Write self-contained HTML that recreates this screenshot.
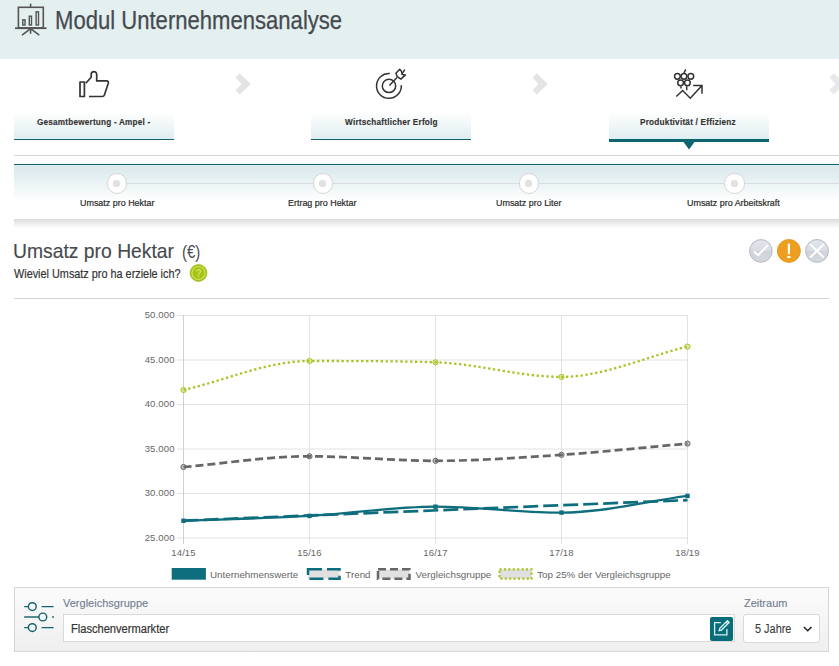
<!DOCTYPE html>
<html><head><meta charset="utf-8">
<style>
*{margin:0;padding:0;box-sizing:border-box}
html,body{width:839px;height:666px;overflow:hidden;background:#fff;font-family:"Liberation Sans",sans-serif}
.a{position:absolute}
.t{position:absolute;white-space:nowrap;line-height:1;transform-origin:0 0}
#hdr{left:0;top:0;width:839px;height:59px;background:#e4f0f0}
.tab{position:absolute;top:112px;width:160px;height:28px;background:linear-gradient(#fff,#e0edf0);border-bottom:1.3px solid #1d5f68;box-shadow:inset 0 -1px 0 #d2f2f6}
.tab.act{border-bottom:3px solid #0f6470}
.lbl{font-weight:bold;font-size:9.5px;letter-spacing:0.25px;color:#333;-webkit-text-stroke:0.15px #333}
.sub{font-size:9.5px;color:#2a2a2a;transform:scaleX(0.94);-webkit-text-stroke:0.2px #2a2a2a}
</style></head><body>
<div id="hdr" class="a"></div>
<!-- header icon -->
<svg class="a" style="left:0;top:0" width="60" height="40" viewBox="0 0 60 40">
 <g fill="none" stroke="#555" stroke-width="1.6">
  <path d="M30.6 3.6V7.3"/>
  <rect x="18.4" y="7.3" width="24.9" height="20.6"/>
  <path d="M15 28.2H46.5" stroke-width="1.8"/>
  <path d="M30.6 28.6V33.7M30.6 28.6L22 35.2M30.6 28.6L39.3 35.2"/>
  <rect x="22.8" y="19.8" width="2.2" height="5.2" stroke-width="1.4"/>
  <rect x="29.3" y="16.2" width="2.2" height="8.8" stroke-width="1.4"/>
  <rect x="36.1" y="11.8" width="2.4" height="13.2" stroke-width="1.4"/>
 </g>
</svg>
<div class="t" style="left:54.8px;top:7.8px;font-size:25px;color:#464a4f;transform:scaleX(0.883);-webkit-text-stroke:0.25px #464a4f">Modul Unternehmensanalyse</div>

<!-- tabs -->
<div class="tab" style="left:14px"></div>
<div class="tab" style="left:311px"></div>
<div class="tab act" style="left:609px;height:29.5px"></div>
<svg class="a" style="left:680px;top:141px" width="18" height="10"><path d="M3 0.3L15 0.3L9 8.4Z" fill="#0f6470"/></svg>
<div class="t lbl" style="left:36.6px;top:117.3px;transform:scaleX(0.859)">Gesamtbewertung - Ampel -</div>
<div class="t lbl" style="left:344.6px;top:117.3px;transform:scaleX(0.863)">Wirtschaftlicher Erfolg</div>
<div class="t lbl" style="left:640.2px;top:117.3px;transform:scaleX(0.866)">Produktivität / Effizienz</div>

<!-- chevrons -->
<svg class="a" style="left:230px;top:70px" width="30" height="30"><path d="M5.5 7.4L9.8 3.3L20.8 13.9L9.8 24.5L5.5 20.3L11.6 13.9Z" fill="#e4e4e7"/></svg>
<svg class="a" style="left:527px;top:70px" width="30" height="30"><path d="M5.5 7.4L9.8 3.3L20.8 13.9L9.8 24.5L5.5 20.3L11.6 13.9Z" fill="#e4e4e7"/></svg>
<svg class="a" style="left:824px;top:70px" width="30" height="30"><path d="M5.5 7.4L9.8 3.3L20.8 13.9L9.8 24.5L5.5 20.3L11.6 13.9Z" fill="#e9e9ec"/></svg>

<!-- thumb icon -->
<svg class="a" style="left:74px;top:66px" width="40" height="34" viewBox="0 0 40 34">
 <g fill="none" stroke="#333" stroke-width="1.7" stroke-linejoin="round">
  <rect x="6" y="16" width="4.4" height="14.5"/>
  <path d="M11.8 17.2L17.2 11.2V8.3A2.75 2.75 0 0 1 22.7 8.3V14.9H32.9Q34.9 15.2 34.3 17.3L30.4 29Q29.9 30.5 28.3 30.5H15"/>
 </g>
</svg>
<!-- target icon -->
<svg class="a" style="left:370px;top:64px" width="40" height="38" viewBox="0 0 40 38">
 <g fill="none" stroke="#333" stroke-width="1.5" stroke-linejoin="round">
  <path d="M19.8 9.6A12.4 12.4 0 1 0 31.3 21.1"/>
  <circle cx="19" cy="21.9" r="6.7"/>
  <path d="M19.4 21.4L27 13.6M31.5 10.6L34.8 5.7"/>
  <path d="M29.7 5.2L25.9 9.3L27.3 12.6L30.9 15.1L35.4 10.9L32.4 10.4L31.4 7.2Z"/>
 </g>
</svg>
<!-- grape icon -->
<svg class="a" style="left:668px;top:64px" width="40" height="38" viewBox="0 0 40 38">
 <g fill="none" stroke="#333" stroke-width="1.5">
  <circle cx="9.4" cy="12.3" r="2.85"/><circle cx="16" cy="12.3" r="2.85"/><circle cx="22.8" cy="12.3" r="2.85"/>
  <circle cx="12.6" cy="18.8" r="2.85"/><circle cx="19.4" cy="18.8" r="2.85"/>
  <path d="M16 9L17.7 5.4M13.1 22.3L12.8 24.5M18.6 22.3L18.8 26.2"/>
  <path d="M8.3 32.5L14.6 26.5L22.3 34.2L33.7 21.7M25.1 21.4H34V29.7"/>
 </g>
</svg>

<!-- divider line -->
<div class="a" style="left:14px;top:155px;width:825px;height:1px;background:#d3d3d3"></div>

<!-- sub tabs -->
<div class="a" style="left:14px;top:163.7px;width:825px;height:56px;background:linear-gradient(#d4f3f6 0px,#dce9ed 2px,#e3eff1 12px,#ffffff 36px,#ffffff 56px);border-top:1.6px solid #1d5f68"></div>
<div class="a" style="left:14px;top:219px;width:825px;height:9px;background:linear-gradient(#dcdcdc,#ffffff)"></div>
<div class="a" style="left:117px;top:183px;width:722px;height:1px;background:#d5dde0"></div>
<div class="a" style="left:106.7px;top:173.4px;width:20.2px;height:20.2px;border-radius:50%;background:#fff;border:1px solid #d6d6d6"></div>
<div class="a" style="left:113.1px;top:179.8px;width:7.4px;height:7.4px;border-radius:50%;background:#e2e2e2;box-shadow:0 0 1px #e2e2e2"></div>
<div class="a" style="left:312.6px;top:173.4px;width:20.2px;height:20.2px;border-radius:50%;background:#fff;border:1px solid #d6d6d6"></div>
<div class="a" style="left:319.0px;top:179.8px;width:7.4px;height:7.4px;border-radius:50%;background:#e2e2e2;box-shadow:0 0 1px #e2e2e2"></div>
<div class="a" style="left:518.5px;top:173.4px;width:20.2px;height:20.2px;border-radius:50%;background:#fff;border:1px solid #d6d6d6"></div>
<div class="a" style="left:524.9px;top:179.8px;width:7.4px;height:7.4px;border-radius:50%;background:#e2e2e2;box-shadow:0 0 1px #e2e2e2"></div>
<div class="a" style="left:724.4px;top:173.4px;width:20.2px;height:20.2px;border-radius:50%;background:#fff;border:1px solid #d6d6d6"></div>
<div class="a" style="left:730.8px;top:179.8px;width:7.4px;height:7.4px;border-radius:50%;background:#e2e2e2;box-shadow:0 0 1px #e2e2e2"></div>
<div class="t sub" style="left:79.7px;top:197.9px">Umsatz pro Hektar</div>
<div class="t sub" style="left:288px;top:197.9px">Ertrag pro Hektar</div>
<div class="t sub" style="left:496px;top:197.9px">Umsatz pro Liter</div>
<div class="t sub" style="left:687.2px;top:197.9px">Umsatz pro Arbeitskraft</div>

<!-- heading -->
<div class="t" style="left:12.6px;top:239.9px;font-size:21px;color:#464a4f;transform:scaleX(0.92);-webkit-text-stroke:0.15px #464a4f">Umsatz pro Hektar</div>
<div class="t" style="left:181.5px;top:242.8px;font-size:18.5px;color:#4a4e55;transform:scaleX(0.81)">(€)</div>
<div class="t" style="left:14px;top:267px;font-size:13px;color:#333;transform:scaleX(0.835);-webkit-text-stroke:0.2px #333">Wieviel Umsatz pro ha erziele ich?</div>
<svg class="a" style="left:188px;top:262px" width="22" height="22" viewBox="0 0 22 22">
 <circle cx="10.5" cy="11" r="8.5" fill="#a6c21a" stroke="#9cb61c" stroke-width="0.6"/>
 <circle cx="10.5" cy="11" r="6.5" fill="none" stroke="#cfe551" stroke-width="1.1"/>
 <text x="10.5" y="14.6" text-anchor="middle" font-family="Liberation Sans" font-weight="bold" font-size="10" fill="#cfe551">?</text>
</svg>
<!-- status icons -->
<svg class="a" style="left:745px;top:235px" width="94" height="32" viewBox="0 0 94 32">
 <defs>
  <linearGradient id="gg" x1="0" y1="0" x2="0" y2="1"><stop offset="0" stop-color="#e2e5ea"/><stop offset="0.5" stop-color="#dadde3"/><stop offset="0.5" stop-color="#cfd3d9"/><stop offset="1" stop-color="#d6d9df"/></linearGradient>
 </defs>
 <circle cx="15.9" cy="15.9" r="11.3" fill="url(#gg)" stroke="#b5b9c2" stroke-width="1"/>
 <path d="M7.9 15.9L12.1 19.7L21.8 9.7" transform="translate(1 0.5)" fill="none" stroke="#fff" stroke-width="2"/>
 <circle cx="43.9" cy="15.9" r="11.5" fill="#ee9f1f" stroke="#dc9020" stroke-width="0.8"/>
 <rect x="42.8" y="8.6" width="2.2" height="10.6" fill="#fff"/>
 <rect x="42.3" y="21" width="3.2" height="2" fill="#fff"/>
 <circle cx="72" cy="15.9" r="11.4" fill="url(#gg)" stroke="#b5b9c2" stroke-width="1"/>
 <path d="M65 9.1L78.9 22.6M78.9 9.1L65 22.6" fill="none" stroke="#fff" stroke-width="2"/>
</svg>

<div class="a" style="left:14px;top:298px;width:815px;height:1px;background:#d3d3d3"></div>

<!-- chart -->
<svg class="a" style="left:0;top:300px" width="839" height="290" viewBox="0 300 839 290">
 <g stroke="#e2e2e2" stroke-width="1" fill="none">
  <path d="M177 315.5H687.5M177 360H687.5M177 404.5H687.5M177 449H687.5M177 493.5H687.5M177 538H687.5"/>
  <path d="M183.5 315.5V544M309.5 315.5V544M435.5 315.5V544M561.5 315.5V544M687.5 315.5V544"/>
 </g>
 <path d="M183.5 315.5V544" stroke="#d0d0d0" stroke-width="1"/>
 <g font-family="Liberation Sans" font-size="9.5" fill="#666" text-anchor="end" letter-spacing="0.15">
  <text x="174.6" y="318.2">50.000</text>
  <text x="174.6" y="362.7">45.000</text>
  <text x="174.6" y="407.2">40.000</text>
  <text x="174.6" y="451.7">35.000</text>
  <text x="174.6" y="496.2">30.000</text>
  <text x="174.6" y="540.7">25.000</text>
 </g>
 <g font-family="Liberation Sans" font-size="9.5" fill="#666" text-anchor="middle" letter-spacing="0.1">
  <text x="183.5" y="556">14/15</text>
  <text x="309.5" y="556">15/16</text>
  <text x="435.5" y="556">16/17</text>
  <text x="561.5" y="556">17/18</text>
  <text x="687.5" y="556">18/19</text>
 </g>
 <g fill="#dce9a8" stroke="#a6c424" stroke-width="1">
  <circle cx="183.5" cy="390" r="2.6"/><circle cx="309.5" cy="361" r="2.6"/><circle cx="435.5" cy="362.3" r="2.6"/><circle cx="561.5" cy="376.9" r="2.6"/><circle cx="687.5" cy="346.6" r="2.6"/>
 </g>
 <g fill="#c4c4c4" stroke="#666" stroke-width="1">
  <circle cx="183.5" cy="467" r="2.6"/><circle cx="309.5" cy="456.3" r="2.6"/><circle cx="435.5" cy="460.8" r="2.6"/><circle cx="561.5" cy="454.8" r="2.6"/><circle cx="687.5" cy="443.6" r="2.6"/>
 </g>
 <path d="M183.50 390.00 C225.50 380.33 267.50 361.00 309.50 361.00 C351.50 361.00 393.50 361.00 435.50 362.30 C477.50 363.60 519.50 376.90 561.50 376.90 C603.50 376.90 645.50 356.70 687.50 346.60" fill="none" stroke="#a6c424" stroke-width="2.3" stroke-dasharray="2.3 2.6"/>
 <path d="M183.50 467.00 C225.50 463.43 267.50 456.30 309.50 456.30 C351.50 456.30 393.50 460.80 435.50 460.80 C477.50 460.80 519.50 457.67 561.50 454.80 C603.50 451.93 645.50 447.33 687.50 443.60" fill="none" stroke="#666" stroke-width="2.7" stroke-dasharray="8 4"/>
 <path d="M183.5 520.6L687.5 500.1" fill="none" stroke="#0f6e7d" stroke-width="2.7" stroke-dasharray="15 5"/>
 <path d="M183.50 520.75 C225.50 519.13 267.50 518.24 309.50 515.90 C351.50 513.56 393.50 506.70 435.50 506.70 C477.50 506.70 519.50 512.60 561.50 512.60 C603.50 512.60 645.50 501.47 687.50 495.90" fill="none" stroke="#0f6e7d" stroke-width="2.3"/>
 <g fill="#0f6e7d">
  <rect x="181.3" y="518.55" width="4.4" height="4.4"/><rect x="307.3" y="513.70" width="4.4" height="4.4"/><rect x="433.3" y="504.50" width="4.4" height="4.4"/><rect x="559.3" y="510.40" width="4.4" height="4.4"/><rect x="685.3" y="493.70" width="4.4" height="4.4"/>
 </g>
 <!-- legend -->
 <rect x="171.7" y="568" width="34.2" height="11.7" fill="#0f6e7d"/>
 <rect x="308" y="569.3" width="31.5" height="9.4" fill="#e0e0e0" stroke="#0f6e7d" stroke-width="2.5" stroke-dasharray="14 5"/>
 <rect x="378" y="569.3" width="31.5" height="9.4" fill="#e0e0e0" stroke="#666" stroke-width="2.5" stroke-dasharray="8 4"/>
 <rect x="499.5" y="569.3" width="32" height="9.4" fill="#e0e0e0" stroke="#a6c424" stroke-width="2.2" stroke-dasharray="2.2 2.2"/>
 <g font-family="Liberation Sans" font-size="9.8" fill="#666">
  <text x="210" y="577.8">Unternehmenswerte</text>
  <text x="345.3" y="577.8">Trend</text>
  <text x="415.6" y="577.8">Vergleichsgruppe</text>
  <text x="537.2" y="577.8">Top 25% der Vergleichsgruppe</text>
 </g>
</svg>

<!-- filter panel -->
<div class="a" style="left:14px;top:587px;width:815px;height:65px;border:1px solid #d6d6d6;background:linear-gradient(#fbfbfb,#efefef)"></div>
<svg class="a" style="left:20px;top:598px" width="40" height="38" viewBox="20 598 40 38">
 <g fill="none" stroke="#14646e" stroke-width="1.45">
  <path d="M24.2 606.6H28.4M41.6 606.6H53.6"/>
  <circle cx="32.3" cy="606.6" r="3.9"/>
  <path d="M24.2 617H38.9"/>
  <circle cx="42.8" cy="617" r="3.9"/>
  <path d="M24.2 627.6H28.4M41.6 627.6H53.6"/>
  <circle cx="32.3" cy="627.6" r="3.9"/>
 </g>
 <circle cx="53" cy="617" r="0.9" fill="#14646e"/>
</svg>
<div class="t" style="left:63.3px;top:597.9px;font-size:11.5px;color:#737e90;transform:scaleX(0.958);-webkit-text-stroke:0.12px #737e90">Vergleichsgruppe</div>
<div class="a" style="left:63.3px;top:614.3px;width:671.8px;height:28.2px;background:#fff;border:1px solid #d9d9d9"></div>
<div class="t" style="left:71px;top:623px;font-size:12px;color:#333;transform:scaleX(0.925);-webkit-text-stroke:0.2px #333">Flaschenvermarkter</div>
<div class="a" style="left:710px;top:617px;width:23px;height:24px;background:#0b6c79;border-radius:2px"></div>
<svg class="a" style="left:706px;top:614px" width="32" height="30" viewBox="0 0 32 30">
 <g fill="none" stroke="#d6f2f2" stroke-width="1.3">
  <path d="M14.9 8.6H8.6V20.9H20.9V15.1"/>
  <path d="M13.2 16.6L13.75 14.35L21.45 6.75L23.15 8.45L15.45 16.05Z M20.15 8.05L21.85 9.75"/>
 </g>
</svg>
<div class="t" style="left:743.5px;top:598.2px;font-size:11.5px;color:#737e90;transform:scaleX(0.958);-webkit-text-stroke:0.12px #737e90">Zeitraum</div>
<div class="a" style="left:743.3px;top:614px;width:76.6px;height:28.8px;background:#fff;border:1px solid #d9d9d9;border-radius:3px"></div>
<div class="t" style="left:754.5px;top:622.7px;font-size:12px;color:#3a3a3a;transform:scaleX(0.91);-webkit-text-stroke:0.1px #3a3a3a">5 Jahre</div>
<svg class="a" style="left:800px;top:622px" width="16" height="14"><path d="M3.9 5L7.7 8.7L11.5 5" fill="none" stroke="#222" stroke-width="1.6"/></svg>
</body></html>
